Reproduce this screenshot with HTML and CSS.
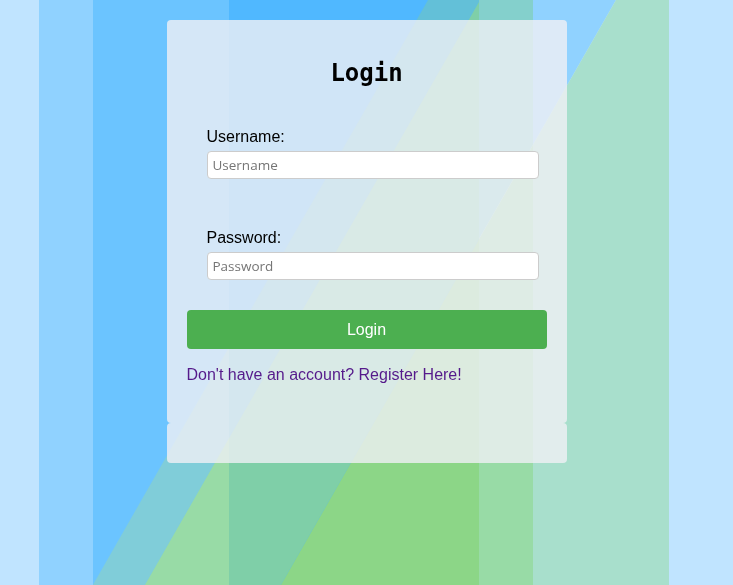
FILE: index.html
```html
<!DOCTYPE html>
<html lang="en">
<head>
<meta charset="utf-8">
<title>Login</title>
<link rel="stylesheet" href="styles.css">
</head>
<body>
<svg class="bg" viewBox="0 0 733 585" preserveAspectRatio="none" aria-hidden="true">
  <defs>
    <clipPath id="c2"><rect x="93" y="0" width="136" height="585"/></clipPath>
    <clipPath id="c3"><rect x="229" y="0" width="250" height="585"/></clipPath>
    <clipPath id="c4"><rect x="479" y="0" width="54" height="585"/></clipPath>
    <clipPath id="c5"><rect x="533" y="0" width="136" height="585"/></clipPath>
  </defs>
  <rect x="0" y="0" width="733" height="585" fill="#c0e4ff"/>
  <rect x="39" y="0" width="54" height="585" fill="#90d2ff"/>
  <g clip-path="url(#c2)">
    <rect x="93" y="0" width="136" height="585" fill="#6bc4ff"/>
    <polygon points="428,0 480,0 144.8,585 92.8,585" fill="#80cdd9"/>
    <polygon points="480,0 616,0 280.8,585 144.8,585" fill="#98dba6"/>
  </g>
  <g clip-path="url(#c3)">
    <rect x="229" y="0" width="250" height="585" fill="#50b8ff"/>
    <polygon points="428,0 480,0 144.8,585 92.8,585" fill="#63c0d8"/>
    <polygon points="480,0 616,0 280.8,585 144.8,585" fill="#7fcfa8"/>
    <polygon points="616,0 733,0 733,585 280.8,585" fill="#8cd687"/>
  </g>
  <g clip-path="url(#c4)">
    <polygon points="428,0 616,0 280.8,585 92.8,585" fill="#84d0cc"/>
    <polygon points="616,0 733,0 733,585 280.8,585" fill="#98dba6"/>
  </g>
  <g clip-path="url(#c5)">
    <polygon points="428,0 616,0 280.8,585 92.8,585" fill="#90d2ff"/>
    <polygon points="616,0 733,0 733,585 280.8,585" fill="#a8dfcc"/>
  </g>
</svg>

<div class="container">
  <form class="login-form">
    <h2 class="title">Login</h2>
    <div class="form-group">
      <label class="field-label" for="username">Username:</label>
      <input class="field-input" id="username" type="text" placeholder="Username">
    </div>
    <div class="form-group">
      <label class="field-label" for="password">Password:</label>
      <input class="field-input" id="password" type="password" placeholder="Password">
    </div>
    <button class="login-btn" type="button">Login</button>
    <p class="register"><a class="register-link" href="#">Don't have an account? Register Here!</a></p>
  </form>
  <div class="extra-box"></div>
</div>
</body>
</html>
```

FILE: styles.css
```css
html, body {
  margin: 0;
  padding: 0;
}

body {
  font-family: "Liberation Sans", Arial, sans-serif;
  font-size: 16px;
  color: #000;
  min-height: 585px;
}

.bg {
  position: fixed;
  left: 0;
  top: 0;
  width: 100%;
  height: 100%;
  z-index: -1;
  display: block;
}

.container {
  width: 400px;
  margin: 20px auto 0;
}

.login-form {
  background: rgba(240, 240, 245, 0.8);
  border-radius: 4px;
  padding: 20px 20px 23px;
}

.title {
  font-family: "DejaVu Sans Mono", "Liberation Mono", monospace;
  font-weight: bold;
  font-size: 24px;
  text-align: center;
  margin: 19px 0 21px;
}

.form-group {
  padding: 20px;
  margin-bottom: 10px;
}

.field-label {
  display: block;
  margin-bottom: 5px;
  font-size: 16px;
  line-height: normal;
}

.field-input {
  display: block;
  box-sizing: content-box;
  width: 100%;
  height: 16px;
  padding: 5px;
  margin: 0;
  border: 1px solid #ccc;
  border-radius: 4px;
  background: #fff;
  font-family: "Open Sans", "Noto Sans", sans-serif;
  font-size: 13.5px;
  line-height: 16px;
  color: #000;
  outline: none;
}

.field-input::placeholder {
  color: #757575;
}

.login-btn {
  display: block;
  width: 100%;
  margin-top: 1px;
  padding: 10px;
  border: none;
  border-radius: 4px;
  background: #4caf50;
  color: #fff;
  font-family: "Liberation Sans", Arial, sans-serif;
  font-size: 16px;
  line-height: 19px;
  cursor: pointer;
}

.register {
  margin: 17px 0 16px;
  font-size: 16px;
}

.register-link {
  color: #551a8b;
  text-decoration: none;
}

.extra-box {
  background: rgba(240, 240, 245, 0.8);
  border-radius: 4px;
  padding: 20px;
}
```
